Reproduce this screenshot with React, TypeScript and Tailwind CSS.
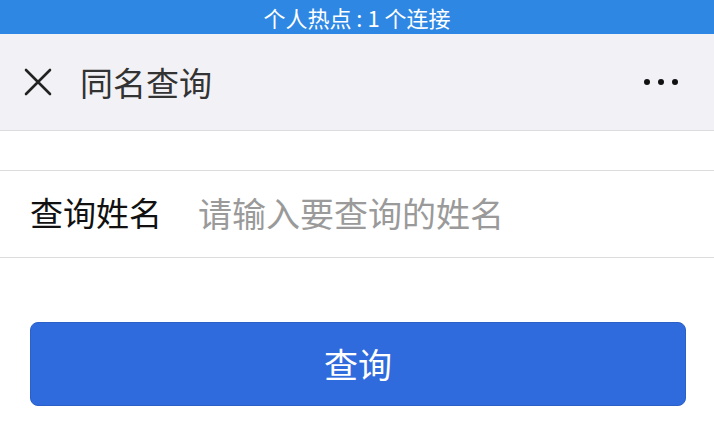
import React from 'react';

const cjk = '"Noto Sans CJK SC", "Noto Sans", sans-serif';

const App: React.FC = () => {
  return (
    <div className="w-[714px] h-[426px] overflow-hidden bg-white flex flex-col" style={{ fontFamily: cjk }}>
      {/* Status bar */}
      <div className="h-[34px] bg-[#2e88e3] flex items-center justify-center text-white text-[22px] leading-none">
        个人热点 : 1 个连接
      </div>

      {/* Nav header */}
      <div className="h-[97px] bg-[#f2f1f5] border-b border-[#dcdcdc] flex items-center pl-[24px] pr-[36px]">
        <svg className="w-[28px] h-[28px]" viewBox="0 0 28 28" fill="none" stroke="#222" strokeWidth={2.6} strokeLinecap="round">
          <path d="M2 2L26 26M26 2L2 26" />
        </svg>
        <span className="ml-[28px] text-[33px] leading-none text-[#333]">同名查询</span>
        <div className="ml-auto flex items-center gap-[8px]">
          <span className="w-[6px] h-[6px] rounded-full bg-[#111]"></span>
          <span className="w-[6px] h-[6px] rounded-full bg-[#111]"></span>
          <span className="w-[6px] h-[6px] rounded-full bg-[#111]"></span>
        </div>
      </div>

      {/* Form */}
      <div className="mt-[39px] border-t border-b border-[#dcdcdc] h-[88px] flex items-center pl-[30px]">
        <span className="text-[33px] leading-none text-[#111] -mt-[4px]">查询姓名</span>
        <input
          className="ml-[36px] flex-1 bg-transparent outline-none text-[34px] leading-none text-[#333] placeholder:text-[#9a9a9a] -mt-[4px]"
          placeholder="请输入要查询的姓名"
          style={{ fontFamily: cjk }}
        />
      </div>

      <div className="pl-[30px] pr-[28px] mt-[64px]">
        <button
          className="w-full h-[84px] rounded-[8px] bg-[#2f6bdd] border border-[#2a60c8] text-white text-[34px] leading-none flex items-center justify-center"
          style={{ fontFamily: cjk }}
        >
          查询
        </button>
      </div>
    </div>
  );
};

export default App;
